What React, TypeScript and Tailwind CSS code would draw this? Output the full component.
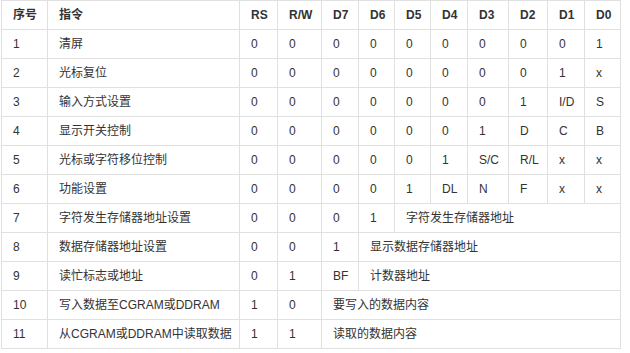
const headers = ['序号', '指令', 'RS', 'R/W', 'D7', 'D6', 'D5', 'D4', 'D3', 'D2', 'D1', 'D0']
const colWidths = [46, 192, 38, 44, 37, 36, 36, 37, 41, 39, 37, 36]

type Cell = string | { text: string; span: number }

const rows: Cell[][] = [
  ['1', '清屏', '0', '0', '0', '0', '0', '0', '0', '0', '0', '1'],
  ['2', '光标复位', '0', '0', '0', '0', '0', '0', '0', '0', '1', 'x'],
  ['3', '输入方式设置', '0', '0', '0', '0', '0', '0', '0', '1', 'I/D', 'S'],
  ['4', '显示开关控制', '0', '0', '0', '0', '0', '0', '1', 'D', 'C', 'B'],
  ['5', '光标或字符移位控制', '0', '0', '0', '0', '0', '1', 'S/C', 'R/L', 'x', 'x'],
  ['6', '功能设置', '0', '0', '0', '0', '1', 'DL', 'N', 'F', 'x', 'x'],
  ['7', '字符发生存储器地址设置', '0', '0', '0', '1', { text: '字符发生存储器地址', span: 6 }],
  ['8', '数据存储器地址设置', '0', '0', '1', { text: '显示数据存储器地址', span: 7 }],
  ['9', '读忙标志或地址', '0', '1', 'BF', { text: '计数器地址', span: 7 }],
  ['10', '写入数据至CGRAM或DDRAM', '1', '0', { text: '要写入的数据内容', span: 8 }],
  ['11', '从CGRAM或DDRAM中读取数据', '1', '1', { text: '读取的数据内容', span: 8 }],
]

export default function App() {
  return (
    <div
      className="w-[630px] h-[353px] bg-white text-[#333] text-[12px] overflow-hidden"
      style={{ fontFamily: '"Liberation Sans", "Noto Sans CJK SC", sans-serif' }}
    >
      <table className="ml-px border-collapse table-fixed w-[620px]">
        <colgroup>
          {colWidths.map((w, i) => (
            <col key={i} style={{ width: w }} />
          ))}
        </colgroup>
        <thead>
          <tr className="h-[29px]">
            {headers.map((h) => (
              <th key={h} className="border border-[#e0e0e0] px-[11px] py-0 text-left font-bold whitespace-nowrap">
                {h}
              </th>
            ))}
          </tr>
        </thead>
        <tbody>
          {rows.map((row, r) => (
            <tr key={r} className="h-[29px]">
              {row.map((c, i) =>
                typeof c === 'string' ? (
                  <td key={i} className="border border-[#e0e0e0] px-[11px] py-0 whitespace-nowrap">
                    {c}
                  </td>
                ) : (
                  <td key={i} colSpan={c.span} className="border border-[#e0e0e0] px-[11px] py-0 whitespace-nowrap">
                    {c.text}
                  </td>
                ),
              )}
            </tr>
          ))}
        </tbody>
      </table>
    </div>
  )
}
